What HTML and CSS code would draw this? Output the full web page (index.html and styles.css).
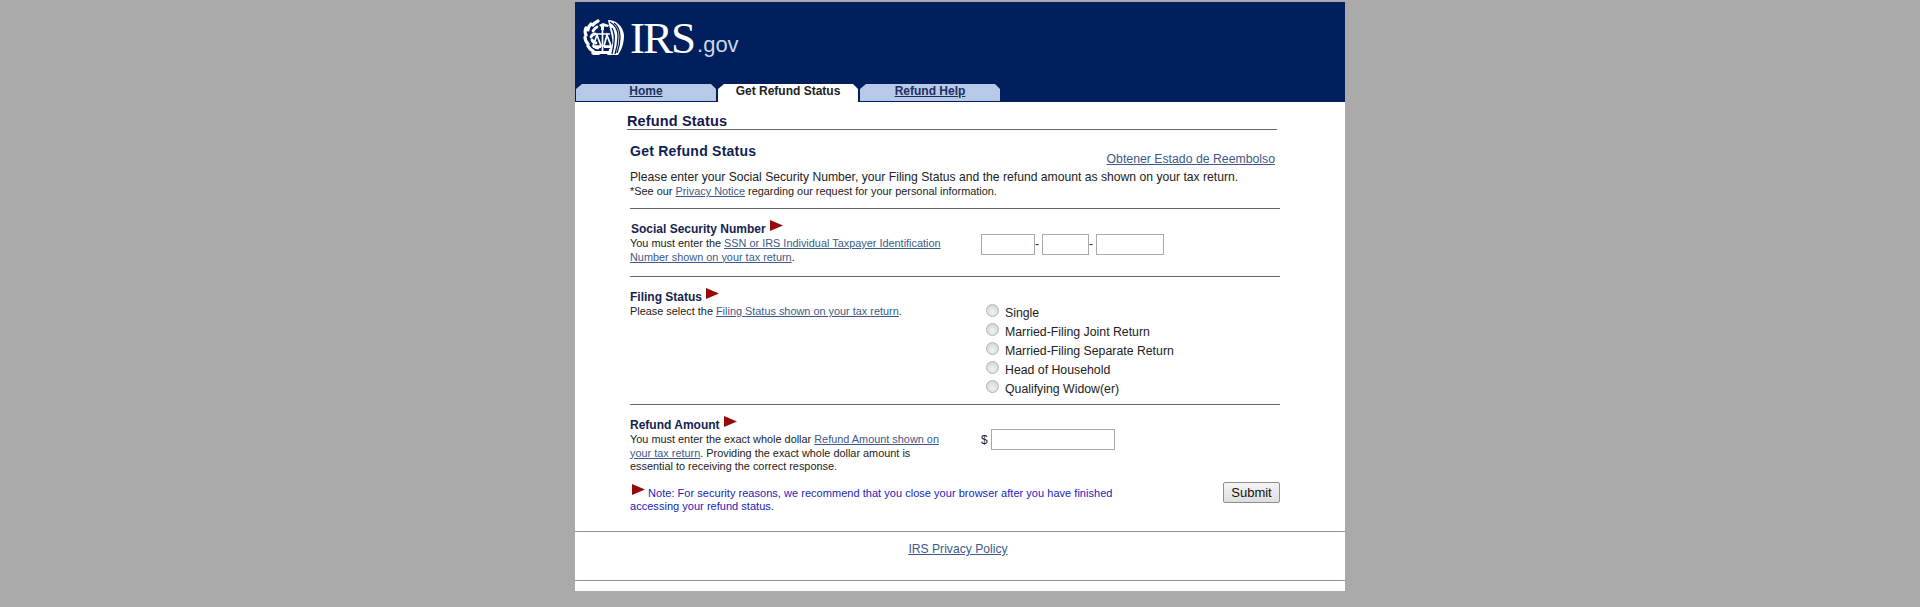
FILE: index.html
```html
<!DOCTYPE html>
<html lang="en">
<head>
<meta charset="utf-8">
<title>Refund Status</title>
<link rel="stylesheet" href="styles.css">
</head>
<body>
<div class="page">
  <header class="masthead">
    <div class="brand">
      <svg class="seal" viewBox="0 0 41 36" aria-hidden="true">
        <g fill="none" stroke="#fff" stroke-linecap="round">
          <path d="M15 2c-2 1-4 2-5 4M8 5C6 7 5 9 5 11M3 9c-1 2-1 5 0 7M2 18c0 3 1 5 3 7M5 27c1 2 3 4 5 5M10 34c2 1 4 1 6 0" stroke-width="3.2"/>
          <path d="M14 8c-2 1-3 2-4 4M12 15c-2 0-3 1-4 3M9 21c1 2 2 3 4 3M12 28c1 1 2 1 3 1" stroke-width="2.8"/>
        </g>
        <path d="M25 1c8 0 15 6 16 15 0 8-2 14-6 20H24c1-1 2-3 2-6 3-1 4-6 3-11-1-6-3-12-4-18z" fill="#fff"/>
        <g fill="none" stroke="#001f5c" stroke-width="1.3">
          <path d="M27 3c5 3 8 8 8 14 0 7-1 12-3 18M31 4c4 3 6 8 6 14 0 6-1 11-3 16M29 9c2 4 3 8 2 14-.2 4-1 8-2 12"/>
        </g>
        <path d="M16 6l4-2 6 2-1 2-4-.5V11h-3V8z" fill="#fff"/>
        <path d="M19.5 10v22M12 15h15" stroke="#fff" stroke-width="1.7" fill="none"/>
        <path d="M14 16l-4 11h8zM24 16l-3 11h7z" fill="none" stroke="#fff" stroke-width="1.7"/>
        <path d="M10 27h8v2h-8zM21 27h7v2h-7zM11 32h17v3H11z" fill="#fff"/>
      </svg>
      <span class="wordmark">IRS</span><span class="domain">.gov</span>
    </div>
    <nav class="tabs">
      <a class="tab" href="#">Home</a>
      <a class="tab tab-active" href="#">Get Refund Status</a>
      <a class="tab" href="#">Refund Help</a>
    </nav>
  </header>

  <main class="content">
    <h1 class="page-title">Refund Status</h1>
    <div class="form-area">
      <div class="intro">
        <div class="intro-top">
          <h2 class="form-title">Get Refund Status</h2>
          <a class="spanish" href="#">Obtener Estado de Reembolso</a>
        </div>
        <p class="lead">Please enter your Social Security Number, your Filing Status and the refund amount as shown on your tax return.</p>
        <p class="small">*See our <a href="#">Privacy Notice</a> regarding our request for your personal information.</p>
      </div>

      <section class="row row-ssn">
        <div class="row-text">
          <h3 class="label label-ssn">Social Security Number <svg class="flag" viewBox="0 0 13 11"><path d="M0 0l13 5.5L0 11z"/></svg></h3>
          <p class="small">You must enter the <a href="#">SSN or IRS Individual Taxpayer Identification Number shown on your tax return</a>.</p>
        </div>
        <div class="ssn-fields">
          <input class="field f-54" type="text" aria-label="SSN part 1"><span class="dash">-</span><input class="field f-47" type="text" aria-label="SSN part 2"><span class="dash">-</span><input class="field f-68" type="text" aria-label="SSN part 3">
        </div>
      </section>

      <section class="row row-filing">
        <div class="row-text">
          <h3 class="label">Filing Status <svg class="flag" viewBox="0 0 13 11"><path d="M0 0l13 5.5L0 11z"/></svg></h3>
          <p class="small">Please select the <a href="#">Filing Status shown on your tax return</a>.</p>
        </div>
        <div class="radios">
          <label class="radio"><span class="dot"></span>Single</label>
          <label class="radio"><span class="dot"></span>Married-Filing Joint Return</label>
          <label class="radio"><span class="dot"></span>Married-Filing Separate Return</label>
          <label class="radio"><span class="dot"></span>Head of Household</label>
          <label class="radio"><span class="dot"></span>Qualifying Widow(er)</label>
        </div>
      </section>

      <section class="row row-amount">
        <div class="row-text">
          <h3 class="label">Refund Amount <svg class="flag" viewBox="0 0 13 11"><path d="M0 0l13 5.5L0 11z"/></svg></h3>
          <p class="small">You must enter the exact whole dollar <a href="#">Refund Amount shown on your tax return</a>. Providing the exact whole dollar amount is essential to receiving the correct response.</p>
        </div>
        <div class="amount-field"><span class="dollar">$</span><input class="field f-124" type="text" aria-label="Refund amount"></div>
      </section>

      <div class="submit-row">
        <p class="note"><svg class="flag" viewBox="0 0 13 11"><path d="M0 0l13 5.5L0 11z"/></svg> Note: For security reasons, we recommend that you close your browser after you have finished accessing your refund status.</p>
        <button class="submit" type="button">Submit</button>
      </div>
    </div>
  </main>

  <footer class="footer"><a href="#">IRS Privacy Policy</a></footer>
  <div class="footer-end"></div>
</div>
</body>
</html>
```
FILE: styles.css
```css
* { box-sizing: border-box; }
html, body { margin: 0; padding: 0; }
body { background: #aaaaaa; font-family: "Liberation Sans", Arial, sans-serif; color: #222; height: 607px; overflow: hidden; }
h1, h2, h3, p { margin: 0; }
.page { width: 770px; margin: 2px auto 0 575px; background: #fff; height: 589px; }
.masthead { background: #001f5c; height: 100px; display: flex; flex-direction: column; justify-content: space-between; }
.brand { display: flex; align-items: flex-start; padding: 10px 0 0 8px; height: 60px; }
.seal { width: 41px; height: 36px; margin-top: 7px; flex: none; }
.wordmark { font-family: "Liberation Serif", serif; font-size: 45px; letter-spacing: -2px; line-height: 52px; color: #fff; margin-left: 6px; }
.domain { font-size: 22px; line-height: 28px; color: #c9d6ea; margin: 19px 0 0 3px; }
.tabs { display: flex; align-items: flex-start; padding-left: 1px; height: 18px; gap: 2px; }
.tab { width: 140px; height: 17px; background: #b8c9e8; clip-path: polygon(6px 0, calc(100% - 5px) 0, 100% 5px, 100% 100%, 0 100%, 0 5px); text-align: center; font-size: 12px; font-weight: bold; line-height: 14px; color: #1c2f63; }
.tab-active { height: 18px; background: #fff; color: #222; text-decoration: none; }
.content { padding: 10px 0 0 52px; }
.page-title { width: 650px; font-size: 14.5px; line-height: 19px; color: #14184f; border-bottom: 1px solid #666; height: 18px; letter-spacing: .15px; }
.form-area { width: 650px; margin-left: 3px; }
.intro { height: 79px; padding-top: 13px; border-bottom: 1px solid #666; width: 650px; }
.intro-top { display: flex; justify-content: space-between; width: 645px; height: 27px; }
.form-title { font-size: 14px; line-height: 17px; color: #0f1f55; letter-spacing: .25px; }
.spanish { font-size: 12.27px; line-height: 16px; margin-top: 8px; height: 16px; color: #3d5a8a; }
.lead { font-size: 12.17px; line-height: 15px; }
.small { font-size: 10.9px; line-height: 13.5px; }
.small a, .footer a { color: #3d5a8a; }
.row { display: grid; grid-template-columns: 351px 1fr; border-bottom: 1px solid #666; width: 650px; padding-top: 12px; }
.row-ssn { height: 68px; }
.row-filing { height: 128px; }
.row-amount { height: 77px; border-bottom: 0; }
.label { font-size: 12px; line-height: 16px; color: #15234f; display: flex; align-items: flex-start; gap: 4px; height: 16px; }
.label-ssn { padding-left: 1px; }
.flag { width: 13px; height: 11px; fill: #970a0a; flex: none; margin-top: -1px; }
.row-text { width: 320px; }
.ssn-fields { display: flex; align-items: center; height: 21px; margin-top: 13px; }
.field { height: 21px; border: 1px solid #a9a9a9; background: #fff; padding: 0; border-radius: 0; }
.f-54 { width: 54px; } .f-47 { width: 47px; } .f-68 { width: 68px; } .f-124 { width: 124px; }
.dash { width: 7px; font-size: 12px; text-align: left; line-height: 21px; }
.radios { display: flex; flex-direction: column; padding: 14px 0 0 5px; }
.radio { display: flex; align-items: center; gap: 6px; height: 19px; font-size: 12.3px; }
.dot { width: 13px; height: 13px; border-radius: 50%; margin-top: -4px; border: 1px solid #b3b3b3; background: radial-gradient(circle at 50% 65%, #f2f2f2, #cfcfcf); }
.amount-field { display: flex; align-items: center; gap: 3px; height: 21px; margin-top: 12px; font-size: 12px; }
.dollar { width: 7px; }
.submit-row { display: flex; justify-content: space-between; align-items: flex-start; width: 650px; height: 49px; }
.note { width: 490px; font-size: 11px; line-height: 13px; color: #2222bb; padding-top: 4px; letter-spacing: .03px; }
.note .flag { margin: 0 0 0 2px; position: relative; top: -2px; vertical-align: 0; }
.submit { width: 57px; height: 21px; padding: 0; font: 13px/1 "Liberation Sans", Arial, sans-serif; color: #111; background: linear-gradient(#f4f4f4, #dedede); border: 1px solid #8f8f8f; border-radius: 2px; }
.footer { border-top: 1px solid #8a9ab5; height: 49px; text-align: center; font-size: 12.15px; line-height: 16px; padding: 9px 4px 0 0; }
.footer-end { border-top: 1px solid #8a9ab5; height: 11px; }
```
